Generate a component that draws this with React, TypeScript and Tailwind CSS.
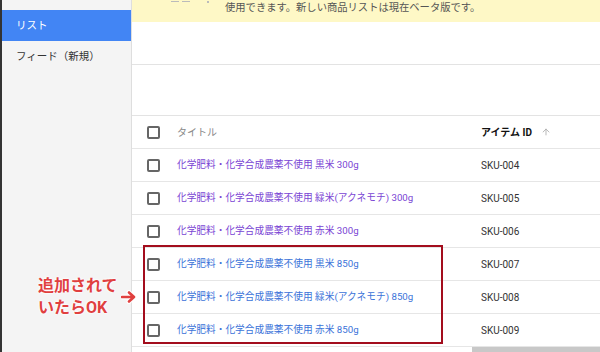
import { ArrowUp } from "lucide-react";

const rows = [
  { title: "化学肥料・化学合成農薬不使用 黒米 300g", id: "SKU-004", visited: true },
  { title: "化学肥料・化学合成農薬不使用 緑米(アクネモチ) 300g", id: "SKU-005", visited: true },
  { title: "化学肥料・化学合成農薬不使用 赤米 300g", id: "SKU-006", visited: true },
  { title: "化学肥料・化学合成農薬不使用 黒米 850g", id: "SKU-007", visited: false },
  { title: "化学肥料・化学合成農薬不使用 緑米(アクネモチ) 850g", id: "SKU-008", visited: false },
  { title: "化学肥料・化学合成農薬不使用 赤米 850g", id: "SKU-009", visited: false },
];

const Box = () => (
  <span className="block w-[13px] h-[13px] border-2 border-[#666] rounded-[2px] shrink-0" />
);

export default function App() {
  return (
    <div
      className="relative w-[600px] h-[352px] overflow-hidden flex bg-white text-[10px]"
      style={{ fontFamily: "Roboto, 'Noto Sans CJK JP', sans-serif" }}
    >
      <div className="w-[2px] bg-[#333]" />
      <aside className="w-[130px] bg-[#f4f4f4] border-r border-[#dedede] pt-[10px] shrink-0">
        <div className="h-[31px] bg-[#4285f4] text-white pl-[14px] flex items-center text-[10.5px]">リスト</div>
        <div className="h-[32px] text-[#333] pl-[14px] flex items-center text-[10.5px]">フィード（新規）</div>
      </aside>

      <main className="relative flex-1 flex flex-col">
        <div className="h-[22px] bg-[#fef8c6] overflow-hidden flex text-[#555] leading-[13px] text-[10.3px]">
          {/* bottom edge of the line above, cut off by the scroll */}
          <span className="ml-[39px] w-[54px] flex items-start gap-[3px] pt-[1px]">
            <span className="w-[8px] h-[1px] bg-[#bbb]" />
            <span className="w-[8px] h-[1px] bg-[#bbb]" />
            <span className="ml-[14px] w-[2px] h-[2px] bg-[#bbb]" />
          </span>
          <span className="pt-[1px]">使用できます。新しい商品リストは現在ベータ版です。</span>
        </div>
        <div className="h-[43px] border-b border-[#e3e3e3]" />
        <div className="h-[51px] border-b border-[#e3e3e3]" />

        <div className="h-[33px] border-b border-[#e6e6e6] flex items-center pl-[15px]">
          <Box />
          <span className="ml-[17px] w-[304px] text-[#888]">タイトル</span>
          <span className="font-bold text-[#111]">アイテム ID</span>
          <ArrowUp className="ml-[9px] w-[10px] h-[10px] text-[#aaa]" strokeWidth={2} />
        </div>

        {rows.map((r) => (
          <div key={r.id} className="h-[33px] border-b border-[#e6e6e6] flex items-center pl-[15px]">
            <Box />
            <span className={`ml-[17px] w-[304px] text-[9.7px] ${r.visited ? "text-[#7a45d4]" : "text-[#3b73d9]"}`}>
              {r.title}
            </span>
            <span className="text-[#333]">{r.id}</span>
          </div>
        ))}

        <div className="absolute left-[11px] top-[245px] w-[300px] h-[99px] border-2 border-[#a30d1d]" />
      </main>

      <div
        className="absolute left-[38px] top-[275px] text-[#e0403f] font-bold text-[16px] leading-[22px]"
        style={{ textShadow: "0 0 2px #fff, 0 0 2px #fff, 0 0 3px #fff" }}
      >
        <div>追加されて</div>
        <div>いたらOK</div>
      </div>
      <svg className="absolute left-[121px] top-[290px]" width="16" height="14" viewBox="0 0 16 14">
        <path d="M1 7h11M8 2.5 13 7l-5 4.5" fill="none" stroke="#fff" strokeWidth="5" strokeLinecap="round" strokeLinejoin="round" />
        <path d="M1 7h11M8 2.5 13 7l-5 4.5" fill="none" stroke="#e0403f" strokeWidth="2.6" strokeLinecap="round" strokeLinejoin="round" />
      </svg>

      <div className="absolute left-[472px] right-0 bottom-0 h-[5px] bg-[#c8c8c8]" />
    </div>
  );
}
